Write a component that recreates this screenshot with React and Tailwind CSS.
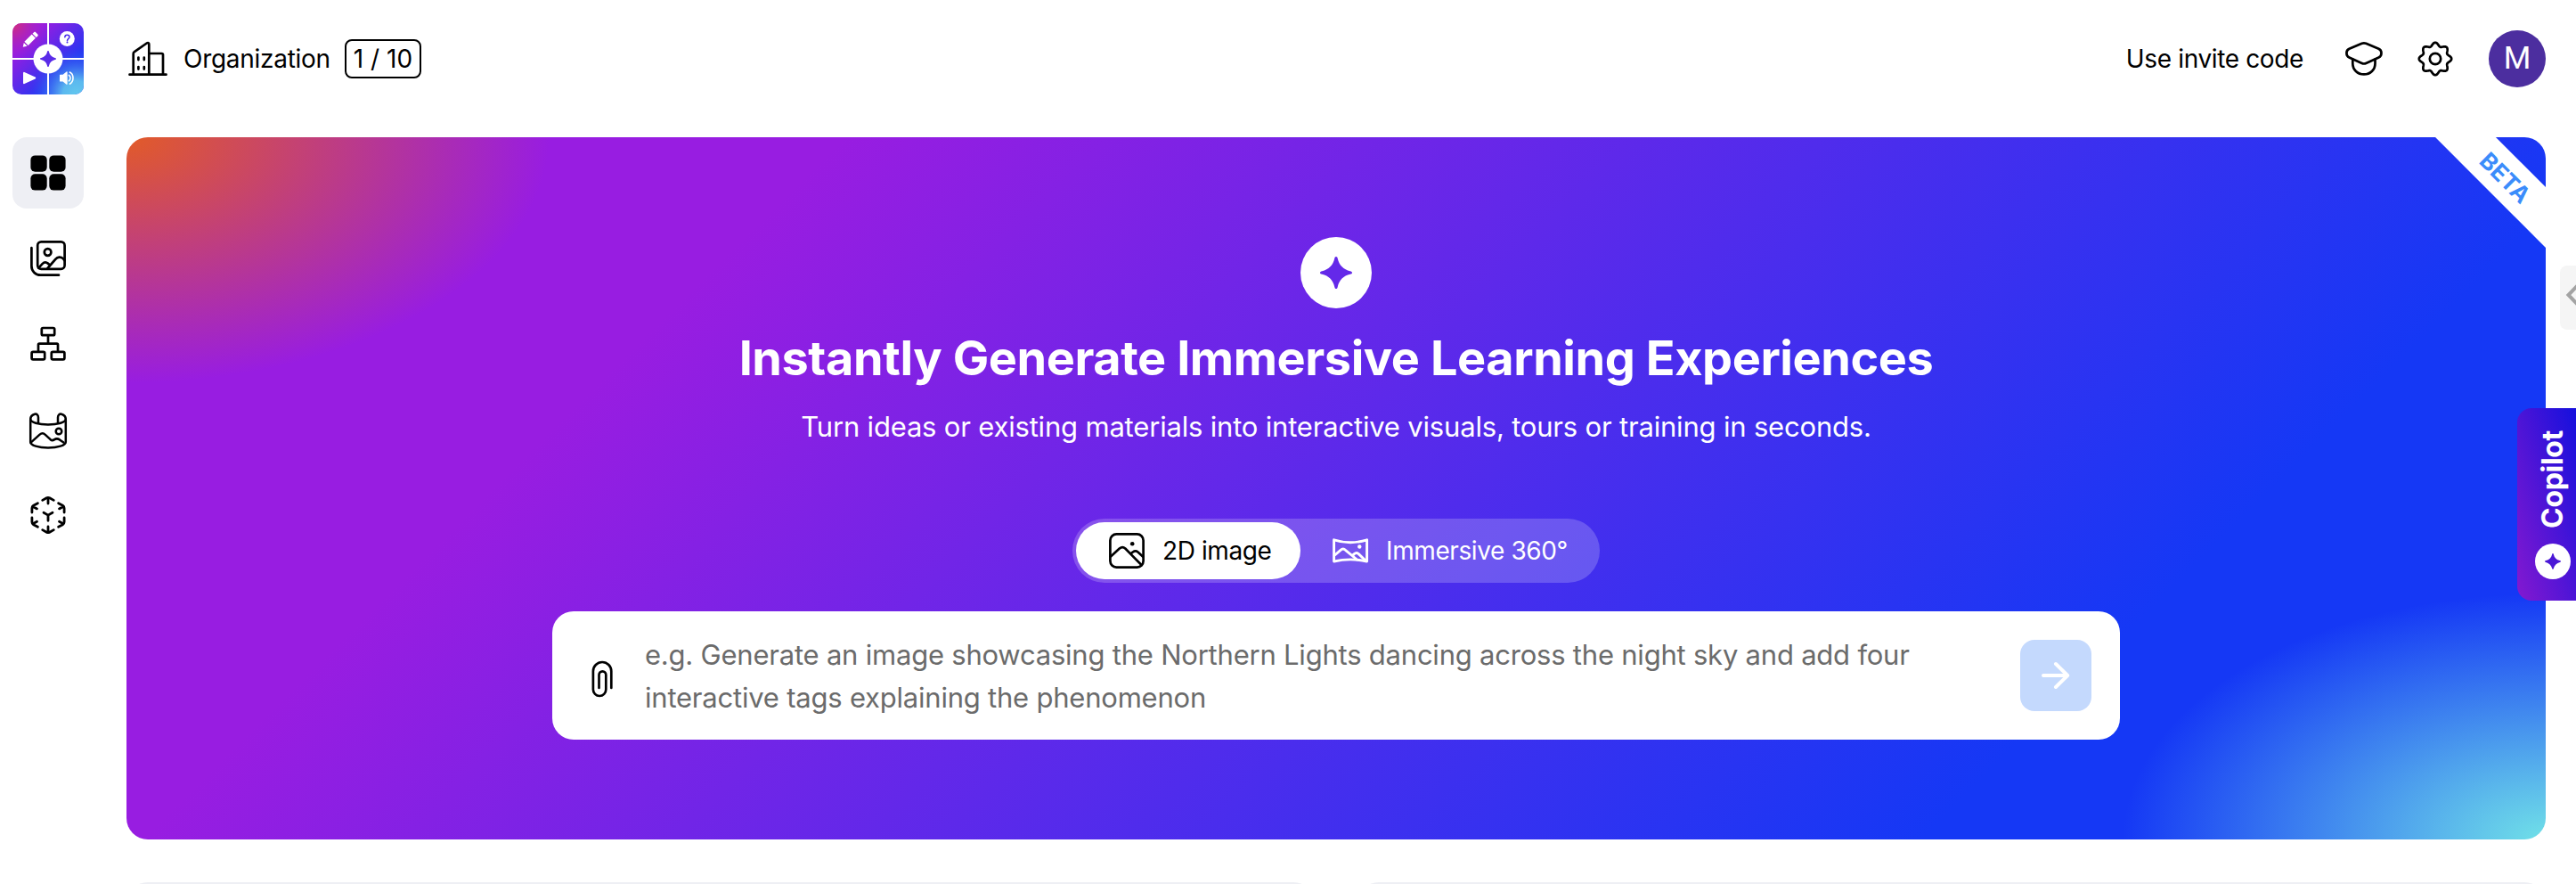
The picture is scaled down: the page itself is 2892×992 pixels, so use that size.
const NAV_ITEMS = [
  { id: "home", Icon: GridIcon },
  { id: "images", Icon: ImagesIcon },
  { id: "tours", Icon: SitemapIcon },
  { id: "panoramas", Icon: ScrollPanoramaIcon },
  { id: "models", Icon: CubeIcon },
];

const Icon = ({ children, className = "", strokeWidth = 2.7 }) => (
  <svg
    className={`size-12 shrink-0 ${className}`}
    viewBox="0 0 48 48"
    fill="none"
    stroke="currentColor"
    strokeWidth={strokeWidth}
    strokeLinecap="round"
    strokeLinejoin="round"
  >
    {children}
  </svg>
);

function GridIcon() {
  return (
    <Icon>
      <g fill="currentColor" stroke="none">
        <rect x="4.4" y="4.4" width="18.3" height="18.3" rx="5" />
        <rect x="25.3" y="4.4" width="18.3" height="18.3" rx="5" />
        <rect x="4.4" y="25.3" width="18.3" height="18.3" rx="5" />
        <rect x="25.3" y="25.3" width="18.3" height="18.3" rx="5" />
      </g>
    </Icon>
  );
}

function ImagesIcon() {
  return (
    <Icon>
      <rect x="12.2" y="5.4" width="30.4" height="30.4" rx="4" />
      <path d="M5.4 12.2v20.3a10 10 0 0 0 10 10.2H36" />
      <circle cx="23.6" cy="17" r="3.8" />
      <path d="M13.2 34.8l4.3-4.6c2-2.1 4.4-2.2 6.3-.6l1.4 1.2M23.5 35l8.8-10.2c2.5-2.8 6-2.9 8.3-.8l2 2.4" />
    </Icon>
  );
}

function SitemapIcon() {
  return (
    <Icon>
      <rect x="16.8" y="6" width="14.4" height="8.2" rx="1.5" />
      <rect x="5.6" y="32.9" width="14.6" height="8.4" rx="1.5" />
      <rect x="27.8" y="32.9" width="14.6" height="8.4" rx="1.5" />
      <path d="M24 14.5v9M13 32v-7.2c0-.8.3-1.2 1.1-1.2h19.8c.8 0 1.1.4 1.1 1.2V32" />
    </Icon>
  );
}

function ScrollPanoramaIcon() {
  return (
    <Icon strokeWidth={2.5}>
      <path d="M13 16.6v-6c0-3-1.8-4.5-4-3.9-2.7.7-4.8 2.6-4.8 5.8v25.5c0 3.7 9 6.5 19.8 6.5s19.8-2.8 19.8-6.5V12.5c0-3.2-2.1-5.1-4.8-5.8-2.2-.6-4 .9-4 3.9v6" />
      <path d="M4.2 12.5c0 3.3 9 5.9 19.8 5.9s19.8-2.6 19.8-5.9" />
      <circle cx="36" cy="26" r="3.3" />
      <path d="M4.6 38.6l10-9c2.2-1.9 4.1-1.9 6 0l6 5.6c1.7 1.5 2.7 1.3 4.3.2 2-1.4 4-1.3 6 0l4.5 3.2" />
    </Icon>
  );
}

function CubeIcon() {
  return (
    <Icon strokeWidth={2.8}>
      <path d="M17.7 7.4l4.6-2.6q1.7-.8 3.4 0l4.6 2.6M24 5v6" />
      <path d="M17.7 40.6l4.6 2.6q1.7.8 3.4 0l4.6-2.6M24 43v-6" />
      <path d="M12.4 10.7l-4.8 2.5q-1.7 1-1.7 3V21M7 14.5l4.5 2.4" />
      <path d="M35.6 10.7l4.8 2.5q1.7 1 1.7 3V21M41 14.5l-4.5 2.4" />
      <path d="M12.4 37.3l-4.8-2.5q-1.7-1-1.7-3V27M7 33.7l4.5-2.4" />
      <path d="M35.6 37.3l4.8-2.5q1.7-1 1.7-3V27M41 33.7l-4.5-2.4" />
      <path d="M19 21.3l5 2.8 5-2.8M24 24.3v6" />
    </Icon>
  );
}

function BuildingIcon() {
  return (
    <Icon>
      <path d="M3.5 41.7h41M7.7 41.5V18.2c0-1 .3-1.6 1.2-2.1L22.7 6.5c1.5-1 2.6-.4 2.6 1.2v33.8" />
      <path d="M25.5 18h14c1 0 1.5.5 1.5 1.5v22" />
      <path d="M13.4 22.5v2.6M19.8 22.5v2.6M13.4 33v2.6M19.8 33v2.6" />
    </Icon>
  );
}

function GraduationIcon() {
  return (
    <Icon>
      <path d="M21.6 6.8a6 6 0 0 1 4.7 0l14.2 6c2.2 1 3 2.4 3 4.8 0 2.8-.7 4-3 5l-14.2 6.4a6 6 0 0 1-4.7 0L7.4 22.6c-2.3-1-3-2.2-3-5 0-2.4.8-3.8 3-4.8z" />
      <path d="M11.3 24.6v4.6c0 7 5.4 12.2 12.6 12.2s12.6-5.2 12.6-12.2v-4.6" />
    </Icon>
  );
}

// Eight soft teeth, sampled round the circle
const gearPath =
  Array.from({ length: 144 }, (_, i) => {
    const angle = (i / 144) * Math.PI * 2;
    const r = 16.3 + 1.9 * Math.cos(8 * angle);
    const x = 24 + r * Math.sin(angle);
    const y = 24 - r * Math.cos(angle);
    return `${i === 0 ? "M" : "L"}${x.toFixed(2)} ${y.toFixed(2)}`;
  }).join("") + "Z";

function GearIcon() {
  return (
    <Icon>
      <path d={gearPath} />
      <circle cx="24" cy="24" r="6.2" />
    </Icon>
  );
}

function PictureIcon() {
  return (
    <Icon>
      <rect x="5.4" y="5.4" width="37.2" height="37.2" rx="7" />
      <path d="M6 30.5l9.8-9c2.4-2 4.3-2 6.5 0L40.5 40M28.4 27.4l2.4-1.9c2-1.5 4-1.4 5.7 0l5.7 5.2" />
      <circle cx="30.2" cy="16.3" r="2.3" fill="currentColor" stroke="none" />
    </Icon>
  );
}

function PanoramaIcon() {
  return (
    <Icon strokeWidth={2.9}>
      <path d="M5.6 11.8Q24 17.6 42.6 11.8V36Q24 31.8 5.6 36Z" />
      <path d="M6.5 29l6.5-5.7c2-1.7 3.7-1.7 5.5 0L31.5 34M26.4 29.3l1.9-1.7c1.6-1.4 3.4-1.4 5 0l7.5 7.2" />
      <circle cx="34.3" cy="19.5" r="2.2" fill="currentColor" stroke="none" />
    </Icon>
  );
}

function PaperclipIcon() {
  return (
    <Icon>
      <path d="M34.3 34V15.2a10.2 10.2 0 0 0-20.4 0v20.6a7.2 7.2 0 0 0 14.4 0V19.2a3.9 3.9 0 0 0-7.8 0V34" />
    </Icon>
  );
}

const Sparkle = ({ className }) => (
  <svg className={className} viewBox="0 0 36 36" fill="currentColor">
    <path d="M18 0c1 0 1.5.8 1.8 2.3C21.3 9.5 26.5 14.7 33.7 16.2c1.5.3 2.3.8 2.3 1.8s-.8 1.5-2.3 1.8C26.5 21.3 21.3 26.5 19.8 33.7 19.5 35.2 19 36 18 36s-1.5-.8-1.8-2.3C14.7 26.5 9.5 21.3 2.3 19.8.8 19.5 0 19 0 18s.8-1.5 2.3-1.8C9.5 14.7 14.7 9.5 16.2 2.3 16.5.8 17 0 18 0z" />
  </svg>
);

const Logo = () => (
  <svg className="size-20 rounded-[10px]" viewBox="0 0 80 80">
    <defs>
      <linearGradient id="logoBase" x1="0" y1="0" x2="1" y2="1">
        <stop offset="0.22" stopColor="#981de1" />
        <stop offset="0.7" stopColor="#2536f2" />
      </linearGradient>
      <radialGradient id="logoWarm" cx="0" cy="0" r="0.56">
        <stop offset="0" stopColor="#d92f72" />
        <stop offset="1" stopColor="#981de1" stopOpacity="0" />
      </radialGradient>
      <radialGradient id="logoCool" cx="0.9" cy="1" r="0.65">
        <stop offset="0" stopColor="#62c8ee" />
        <stop offset="0.3" stopColor="#5bb8ef" />
        <stop offset="1" stopColor="#2a50f2" stopOpacity="0" />
      </radialGradient>
    </defs>
    <rect width="80" height="80" fill="url(#logoBase)" />
    <rect width="80" height="80" fill="url(#logoWarm)" />
    <rect width="80" height="80" fill="url(#logoCool)" />
    <path d="M40 0v80M0 40h80" stroke="#fff" strokeWidth="2" />
    <circle cx="40" cy="40" r="16.5" fill="#fff" />
    <path
      d="M40 31c.6 0 .8.5 1 1.3.8 3.5 3.2 5.9 6.7 6.7.8.2 1.3.4 1.3 1s-.5.8-1.3 1c-3.5.8-5.9 3.2-6.7 6.7-.2.8-.4 1.3-1 1.3s-.8-.5-1-1.3c-.8-3.5-3.2-5.9-6.7-6.7-.8-.2-1.3-.4-1.3-1s.5-.8 1.3-1c3.5-.8 5.9-3.2 6.7-6.7.2-.8.4-1.3 1-1.3z"
      fill="#5a2be8"
    />
    {/* pencil */}
    <g transform="translate(19.5 19) rotate(45)" fill="#fff">
      <path d="M-3-9.5c0-.8.6-1.4 1.4-1.4h3.2c.8 0 1.4.6 1.4 1.4v2.3h-6zM-3-6.1h6V5.6h-6zM-2.7 6.8h5.4L0 11z" />
    </g>
    {/* help */}
    <circle cx="61.3" cy="17.5" r="8.5" fill="#fff" />
    <path
      d="M58.8 15.8c0-1.7 1-2.6 2.6-2.6s2.6.9 2.6 2.3c0 1.9-2.5 2-2.5 4.2"
      fill="none"
      stroke="#4a2cec"
      strokeWidth="1.5"
      strokeLinecap="round"
    />
    <circle cx="61.5" cy="21.6" r="1" fill="#4a2cec" />
    {/* play */}
    <path
      d="M13 55.8v11.4l12.2-5.7z"
      fill="#fff"
      stroke="#fff"
      strokeWidth="2"
      strokeLinejoin="round"
    />
    {/* volume */}
    <path
      d="M53.7 58.3h3.3l4-3.3v13.2l-4-3.3h-3.3z"
      fill="#fff"
      stroke="#fff"
      strokeWidth="1.3"
      strokeLinejoin="round"
    />
    <path
      d="M62.8 58c3 1.6 3 5.6 0 7.2M63.8 54.7c5.6 2.3 5.6 11.4 0 13.7"
      fill="none"
      stroke="#fff"
      strokeWidth="1.6"
    />
  </svg>
);

const Sidebar = () => (
  <aside className="flex w-[142px] shrink-0 flex-col gap-12 pt-[26px] pl-3.5">
    <Logo />
    <nav className="flex flex-col gap-4">
      {NAV_ITEMS.map(({ id, Icon: NavIcon }) => (
        <button
          key={id}
          className={`flex size-20 items-center justify-center rounded-2xl ${
            id === "home" ? "bg-[#eeeff4]" : ""
          }`}
        >
          <NavIcon />
        </button>
      ))}
    </nav>
  </aside>
);

const Header = () => (
  <header className="mb-[22px] flex h-[132px] items-center justify-between text-[28px]">
    <div className="flex items-center">
      <BuildingIcon />
      <span className="ml-4 w-[165px] tracking-[-0.01em] whitespace-nowrap">Organization</span>
      <span className="ml-4 flex h-11 w-[86px] items-center justify-center rounded-lg border-2 border-black whitespace-nowrap">
        1 / 10
      </span>
    </div>
    <div className="flex items-center">
      <span className="mr-11 tracking-[-0.013em]">Use invite code</span>
      <GraduationIcon />
      <span className="ml-8 flex">
        <GearIcon />
      </span>
      <div className="ml-9 flex size-16 items-center justify-center rounded-full bg-[#4c2e9f] font-[Roboto,sans-serif] text-[35px] text-white">
        M
      </div>
    </div>
  </header>
);

const ModeToggle = () => (
  <div className="mt-[79px] flex h-[72px] rounded-full bg-white/20 p-1 text-[28px] text-white">
    <button className="flex w-[252px] items-center gap-4 rounded-full bg-white pl-[33px] text-black">
      <PictureIcon />
      <span className="tracking-[-0.014em] whitespace-nowrap">2D image</span>
    </button>
    <button className="flex w-[332px] items-center gap-4 pl-8">
      <PanoramaIcon />
      <span className="tracking-[-0.014em] whitespace-nowrap">Immersive 360°</span>
    </button>
  </div>
);

const PromptBox = () => (
  <div className="mt-8 flex h-36 w-[1760px] items-center rounded-3xl bg-white px-8">
    <span className="mt-2 text-black">
      <PaperclipIcon />
    </span>
    <p className="mt-0.5 ml-6 flex-1 text-[31px] leading-[48px] tracking-[-0.007em] text-[#6b6b6b]">
      e.g. Generate an image showcasing the Northern Lights dancing across the night sky and add four
      <br />
      interactive tags explaining the phenomenon
    </p>
    <button className="flex size-20 items-center justify-center rounded-2xl bg-[#c4d9fd] text-white">
      <Icon strokeWidth={4}>
        <path d="M10 24h27M24 11l13.2 13L24 37" />
      </Icon>
    </button>
  </div>
);

const Hero = () => (
  <section className="relative flex h-[788px] flex-col items-center overflow-hidden rounded-3xl bg-[radial-gradient(475px_276px_at_0%_0%,#e25b28_0%,#981de100_100%),radial-gradient(475px_276px_at_100%_100%,#70e0e8_0%,#1538f500_100%),linear-gradient(135deg,#981de1_23%,#1538f5_80%)] pt-28 text-white">
    <div className="flex size-20 items-center justify-center rounded-full bg-white text-[#6429e9]">
      <Sparkle className="size-9" />
    </div>
    <h1 className="mt-6 text-[54px] leading-[64px] font-bold tracking-[-0.008em] whitespace-nowrap">
      Instantly Generate Immersive Learning Experiences
    </h1>
    <p className="mt-[21px] text-[31px] leading-[48px] tracking-[-0.006em] whitespace-nowrap">
      Turn ideas or existing materials into interactive visuals, tours or training in seconds.
    </p>
    <ModeToggle />
    <PromptBox />
    <div className="absolute top-[21px] -right-[75px] flex h-12 w-60 rotate-45 items-center justify-center bg-white text-[26px] font-bold text-[#3b8cfb]">
      BETA
    </div>
  </section>
);

const App = () => (
  <div className="relative flex h-[992px] w-[2892px] overflow-hidden bg-white font-[Inter,sans-serif] text-black">
    <Sidebar />
    <main className="w-[2716px] shrink-0">
      <Header />
      <Hero />
      <div className="mt-12 grid grid-cols-2 gap-12">
        <div className="h-40 rounded-3xl bg-[#eeeff4]" />
        <div className="h-40 rounded-3xl bg-[#eeeff4]" />
      </div>
    </main>

    <button className="absolute top-[298px] right-0 flex h-[72px] w-[18px] overflow-hidden rounded-l-lg bg-[#f5f5f5]">
      <svg className="h-[72px] w-[18px]" viewBox="0 0 18 72" fill="none">
        <path d="M24 18L9.5 33 24 48" stroke="#a3a3a3" strokeWidth="4" />
      </svg>
    </button>

    <button className="absolute top-[458px] right-0 flex h-[216px] w-[66px] flex-col items-center justify-end rounded-l-2xl bg-[linear-gradient(to_top_right,#8419d0_0%,#1510dd_100%)] pb-6 pl-3.5 text-white">
      <span className="mb-[17px] rotate-180 text-[32px] leading-10 font-bold tracking-[-0.01em] [writing-mode:vertical-rl]">
        Copilot
      </span>
      <span className="flex size-10 items-center justify-center rounded-full bg-white text-[#4a17d6]">
        <Sparkle className="size-[18px]" />
      </span>
    </button>
  </div>
);

export default App;
